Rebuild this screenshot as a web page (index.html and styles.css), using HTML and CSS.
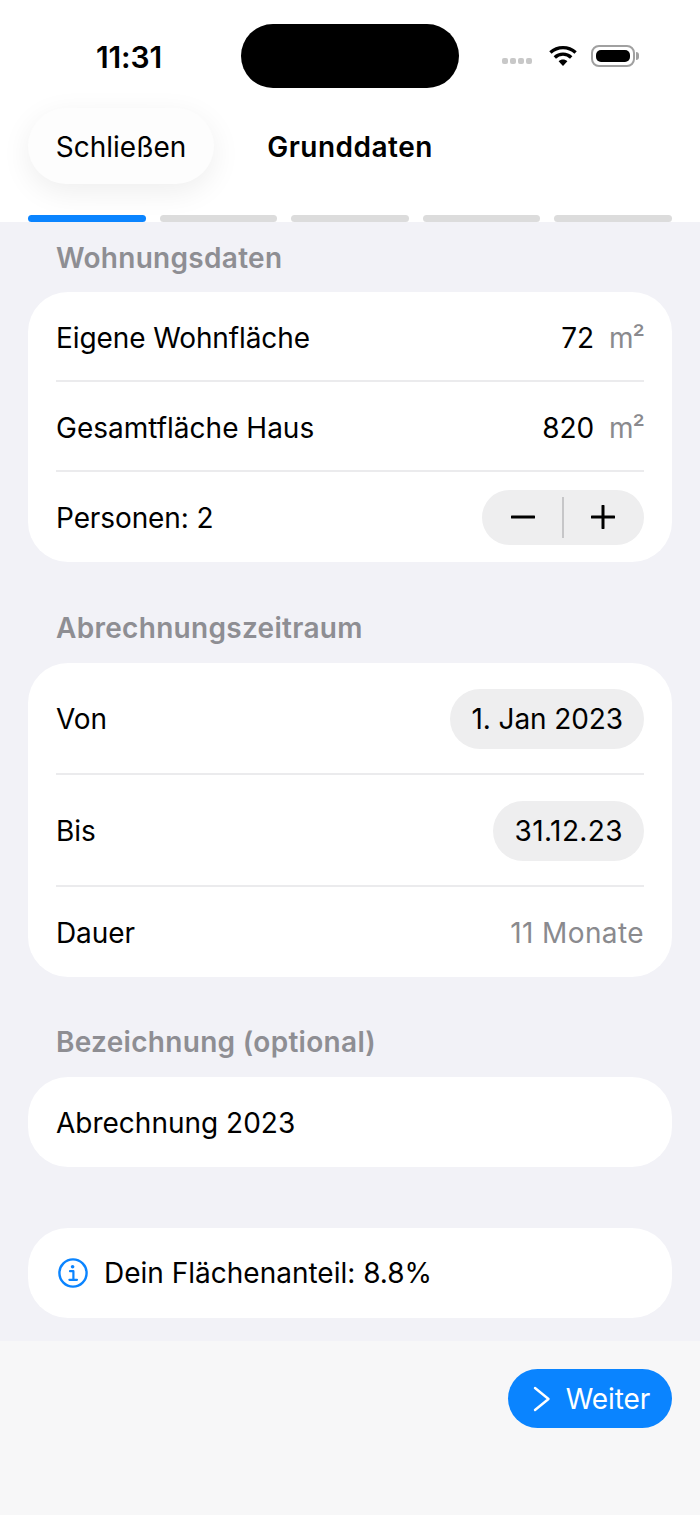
FILE: index.html
```html
<!DOCTYPE html>
<html>
<head>
    <title>Grunddaten</title>
    <link rel="stylesheet" href="styles.css">
</head>
<body>
    <header class="top">
        <div class="status">
            <span class="time">11:31</span>
            <div class="island"></div>
            <div class="status-icons">
                <div class="dots"><i></i><i></i><i></i><i></i></div>
                <svg class="wifi" width="30" height="22" viewBox="0 0 30 22">
                    <path d="M15 21 L10.6 16.2 C13 13.8 17 13.8 19.4 16.2 Z" fill="#000"/>
                    <path d="M6.8 12.4 C11.4 8 18.6 8 23.2 12.4" fill="none" stroke="#000" stroke-width="3.4"/>
                    <path d="M2.4 7.6 C9.6 1 20.4 1 27.6 7.6" fill="none" stroke="#000" stroke-width="3.4"/>
                </svg>
                <div class="battery"><div class="battery-fill"></div></div>
                <div class="battery-cap"></div>
            </div>
        </div>
        <div class="nav">
            <button class="close-btn">Schließen</button>
            <span class="nav-title">Grunddaten</span>
        </div>
        <div class="progress">
            <div class="step active"></div>
            <div class="step"></div>
            <div class="step"></div>
            <div class="step"></div>
            <div class="step"></div>
        </div>
    </header>

    <main class="content">
        <h2 class="section-title first">Wohnungsdaten</h2>
        <section class="card">
            <div class="row row-line row-low">
                <span>Eigene Wohnfläche</span>
                <span class="value">72<span class="unit">m²</span></span>
            </div>
            <div class="row row-line row-low">
                <span class="wide">Gesamtfläche Haus</span>
                <span class="value">820<span class="unit">m²</span></span>
            </div>
            <div class="row">
                <span>Personen: 2</span>
                <div class="stepper">
                    <svg width="24" height="24" viewBox="0 0 24 24"><path d="M1 12H23" stroke="#000" stroke-width="3" stroke-linecap="round"/></svg>
                    <div class="stepper-sep"></div>
                    <svg width="24" height="24" viewBox="0 0 24 24"><path d="M1 12H23M12 1V23" stroke="#000" stroke-width="3" stroke-linecap="round"/></svg>
                </div>
            </div>
        </section>

        <h2 class="section-title second">Abrechnungszeitraum</h2>
        <section class="card">
            <div class="row row-tall row-line">
                <span>Von</span>
                <span class="date-pill">1. Jan 2023</span>
            </div>
            <div class="row row-tall row-line">
                <span>Bis</span>
                <span class="date-pill spaced">31.12.23</span>
            </div>
            <div class="row">
                <span>Dauer</span>
                <span class="muted spaced">11 Monate</span>
            </div>
        </section>

        <h2 class="section-title">Bezeichnung (optional)</h2>
        <section class="card">
            <div class="row">
                <span class="wide">Abrechnung 2023</span>
            </div>
        </section>

        <section class="card info-card">
            <svg class="info-icon" width="30" height="30" viewBox="0 0 30 30">
                <circle cx="15" cy="15" r="13.6" fill="none" stroke="#0a84ff" stroke-width="2.4"/>
                <circle cx="14.6" cy="8.8" r="1.8" fill="#0a84ff"/>
                <path d="M12 13.2H15.4V21.6M11.4 21.8H19" fill="none" stroke="#0a84ff" stroke-width="2.2" stroke-linecap="round" stroke-linejoin="round"/>
            </svg>
            <span class="wide">Dein Flächenanteil: 8.8%</span>
        </section>
    </main>

    <footer class="bottom">
        <button class="next-btn">
            <svg width="18" height="26" viewBox="0 0 18 26"><path d="M2 2L15.5 13L2 24" fill="none" stroke="#fff" stroke-width="2.4" stroke-linecap="round" stroke-linejoin="round"/></svg>
            Weiter
        </button>
    </footer>
</body>
</html>
```

FILE: styles.css
```css
* {
    box-sizing: border-box;
}

body {
    margin: 0;
    width: 700px;
    height: 1515px;
    display: flex;
    flex-direction: column;
    background-color: #f2f2f7;
    font-family: Inter, "Liberation Sans", sans-serif;
    font-size: 28px;
    letter-spacing: -0.1px;
    color: #000;
    overflow: hidden;
}

/* Top area */
.top {
    height: 222px;
    background-color: #fff;
    flex-shrink: 0;
}

.status {
    height: 84px;
    padding-top: 24px;
    display: flex;
    align-items: flex-start;
}

.time {
    width: 241px;
    padding-top: 15px;
    padding-left: 17px;
    text-align: center;
    font-size: 30px;
    line-height: 36px;
    font-weight: 600;
}

.island {
    width: 218px;
    height: 64px;
    border-radius: 32px;
    background-color: #000;
}

.status-icons {
    display: flex;
    align-items: center;
    padding: 21px 0 0 43px;
}

.dots {
    display: flex;
    gap: 2px;
    margin-top: 10px;
    margin-right: 16px;
}

.dots i {
    width: 6px;
    height: 6px;
    border-radius: 2px;
    background-color: #c8c8c8;
}

.wifi {
    margin-right: 13px;
}

.battery {
    width: 44px;
    height: 22px;
    padding: 3px;
    border: 2px solid #a0a0a0;
    border-radius: 8px;
}

.battery-fill {
    width: 100%;
    height: 100%;
    border-radius: 5px;
    background-color: #000;
}

.battery-cap {
    width: 3px;
    height: 8px;
    margin-left: 1px;
    border-radius: 0 3px 3px 0;
    background-color: #a0a0a0;
}

.nav {
    height: 76px;
    margin-top: 24px;
    padding: 0 28px;
    display: grid;
    grid-template-columns: 1fr auto 1fr;
    align-items: center;
}

.close-btn {
    width: 186px;
    height: 76px;
    padding-top: 2px;
    border: none;
    border-radius: 38px;
    background-color: #fdfdfd;
    box-shadow: 0 8px 30px rgba(0, 0, 0, 0.07);
    font: inherit;
    letter-spacing: 0;
    color: #000;
}

.nav-title {
    padding-top: 2px;
    font-weight: 600;
    letter-spacing: 0.5px;
}

.progress {
    display: flex;
    gap: 14px;
    margin-top: 31px;
    padding: 0 28px;
}

.step {
    flex: 1;
    height: 7px;
    border-radius: 4px;
    background-color: #dcdcdc;
}

.step.active {
    background-color: #0a84ff;
}

/* Form cards */
.content {
    flex: 1;
    padding: 0 28px;
}

.section-title {
    margin: 0;
    padding: 48px 28px 18px;
    font-size: 28px;
    line-height: 34px;
    font-weight: 600;
    letter-spacing: 0.3px;
    color: #8e8e93;
}

.section-title.first {
    padding-top: 19px;
    padding-bottom: 17px;
}

.section-title.second {
    padding-top: 49px;
}

.card {
    background-color: #fff;
    border-radius: 40px;
    padding: 0 28px;
}

.row {
    height: 90px;
    display: flex;
    align-items: center;
    justify-content: space-between;
}

.row > span {
    padding-top: 1px;
}

.row-low > span {
    padding-top: 3px;
}

.row-tall {
    height: 112px;
}

.row-line {
    border-bottom: 2px solid #ebebed;
}

.wide {
    letter-spacing: 0;
}

.spaced {
    letter-spacing: 0.4px;
}

.value {
    display: flex;
    align-items: center;
}

.unit {
    margin-left: 15px;
    letter-spacing: -1px;
    color: #8a8a8e;
}

.muted {
    color: #8a8a8e;
}

.stepper {
    width: 162px;
    height: 55px;
    border-radius: 28px;
    background-color: #eeeeef;
    display: flex;
    align-items: center;
    justify-content: space-between;
    padding: 0 29px;
}

.stepper-sep {
    width: 2px;
    height: 41px;
    background-color: #c6c6c8;
}

.row > .date-pill {
    height: 60px;
    margin-top: 2px;
    padding: 0 21px 0 22px;
    display: flex;
    align-items: center;
    border-radius: 30px;
    background-color: #eeeeef;
}

.info-card {
    height: 90px;
    margin-top: 61px;
    display: flex;
    align-items: center;
    gap: 16px;
}

.info-icon {
    margin-left: 2px;
}

/* Bottom bar */
.bottom {
    height: 174px;
    flex-shrink: 0;
    background-color: #f7f7f8;
    display: flex;
    justify-content: flex-end;
    padding: 28px 28px 0;
}

.next-btn {
    width: 164px;
    height: 59px;
    padding: 0 0 0 3px;
    border: none;
    border-radius: 30px;
    background-color: #0a84ff;
    color: #fff;
    font: inherit;
    letter-spacing: inherit;
    display: flex;
    align-items: center;
    justify-content: center;
    gap: 15px;
}
```
